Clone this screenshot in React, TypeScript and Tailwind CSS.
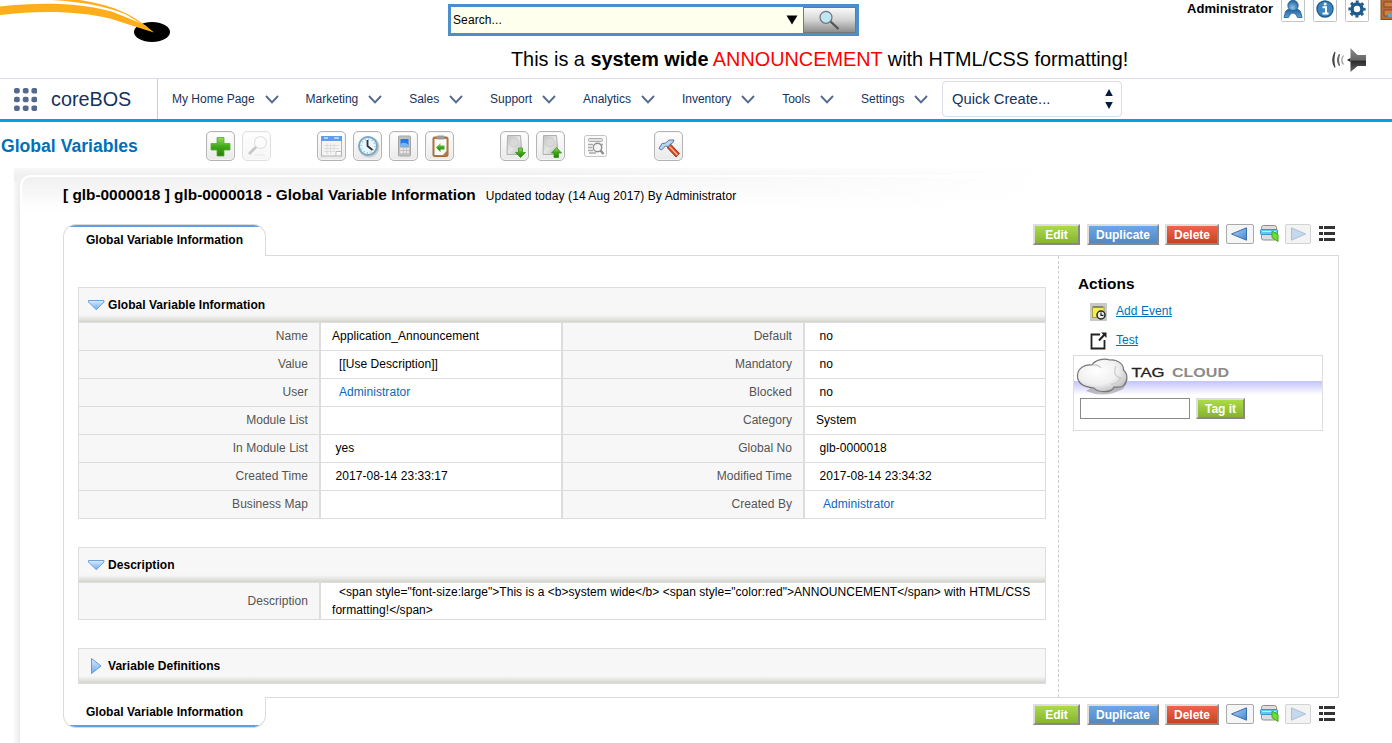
import React from "react";

const MENU = ["My Home Page", "Marketing", "Sales", "Support", "Analytics", "Inventory", "Tools", "Settings"];

type Cell = { label: string; value: string; pad?: string; link?: boolean };

const ROWS: [Cell, Cell][] = [
  [{ label: "Name", value: "Application_Announcement", pad: "pl-[11px]" }, { label: "Default", value: "no" }],
  [{ label: "Value", value: "[[Use Description]]", pad: "pl-[18px]" }, { label: "Mandatory", value: "no" }],
  [{ label: "User", value: "Administrator", pad: "pl-[18px]", link: true }, { label: "Blocked", value: "no" }],
  [{ label: "Module List", value: "" }, { label: "Category", value: "System", pad: "pl-[11px]" }],
  [{ label: "In Module List", value: "yes" }, { label: "Global No", value: "glb-0000018" }],
  [{ label: "Created Time", value: "2017-08-14 23:33:17" }, { label: "Modified Time", value: "2017-08-14 23:34:32" }],
  [{ label: "Business Map", value: "" }, { label: "Created By", value: "Administrator", pad: "pl-[18px]", link: true }],
];

function Gradients() {
  return (
    <svg width="0" height="0" className="absolute">
      <defs>
        <linearGradient id="green" x1="0" y1="0" x2="0" y2="1">
          <stop offset="0" stopColor="#8fdc5c" />
          <stop offset="0.5" stopColor="#3fa817" />
          <stop offset="1" stopColor="#2a7d0c" />
        </linearGradient>
        <linearGradient id="blue" x1="0" y1="0" x2="0" y2="1">
          <stop offset="0" stopColor="#1c5f9c" />
          <stop offset="1" stopColor="#5fa0d2" />
        </linearGradient>
        <linearGradient id="sky" x1="0" y1="0" x2="0" y2="1">
          <stop offset="0" stopColor="#d8ecff" />
          <stop offset="1" stopColor="#6fa9ec" />
        </linearGradient>
        <linearGradient id="arrow" x1="0" y1="0" x2="1" y2="1">
          <stop offset="0" stopColor="#b4d2f2" />
          <stop offset="1" stopColor="#3f87d4" />
        </linearGradient>
        <linearGradient id="metal" x1="0" y1="0" x2="1" y2="1">
          <stop offset="0" stopColor="#c0c0c0" />
          <stop offset="0.5" stopColor="#e6e6e6" />
          <stop offset="1" stopColor="#b8b8b8" />
        </linearGradient>
        <linearGradient id="speaker" x1="0" y1="0" x2="0" y2="1">
          <stop offset="0" stopColor="#8a8a8a" />
          <stop offset="0.5" stopColor="#666" />
          <stop offset="0.55" stopColor="#2c2c2c" />
          <stop offset="1" stopColor="#666" />
        </linearGradient>
        <radialGradient id="head" cx="0.45" cy="0.7" r="0.7">
          <stop offset="0" stopColor="#8cc3e8" />
          <stop offset="1" stopColor="#1d5f9b" />
        </radialGradient>
        <radialGradient id="cloud" cx="0.4" cy="0.35" r="0.7">
          <stop offset="0" stopColor="#ffffff" />
          <stop offset="0.6" stopColor="#f0f0f0" />
          <stop offset="1" stopColor="#bdbdbd" />
        </radialGradient>
      </defs>
    </svg>
  );
}

function Chevron() {
  return (
    <svg width="14" height="9" viewBox="0 0 14 9">
      <path d="M1 1 L7 7.4 L13 1" fill="none" stroke="#54698d" strokeWidth="1.9" />
    </svg>
  );
}

function Header() {
  return (
    <header className="flex h-[78px] items-start">
      <svg width="448" height="44" viewBox="0 0 448 44" className="shrink-0">
        <ellipse cx="152" cy="32" rx="18" ry="10" fill="#000" />
        <path d="M0 6.500 C40 2 80 2.500 113 12 L145 25 L154 32.500 Q130 25 110 18.500 C80 11 40 10 0 15 Z" fill="#feae1b" />
        <path d="M52 0 C82 2 106 6 126 14.500 L146 26.500 C132 14 110 4 76 -0.500 Z" fill="#feae1b" />
      </svg>
      <div className="flex w-[744px] shrink-0 flex-col items-center">
        <div className="mt-1 flex h-8 w-[411px] self-start border-[3px] border-[#4d8fcc] bg-[#ffffee]">
          <div className="flex flex-1 items-center justify-between pr-[5px] pl-[2px] text-[12px] tracking-[0.1px]">
            <span>Search...</span>
            <svg width="12" height="10" viewBox="0 0 12 10"><path d="M0.5 0.5H11.5L6 9.5Z" fill="#000" /></svg>
          </div>
          <div className="flex w-[53px] justify-center border border-[#777] bg-linear-to-b from-[#fafafa] via-[#d4d4d4] to-[#8e8e8e]">
            <svg width="24" height="22" viewBox="0 0 24 22" className="mt-px">
              <path d="M12 12 L20.5 20" stroke="#555" strokeWidth="2.4" />
              <circle cx="8" cy="8.3" r="6" fill="#c0e6f3" stroke="#6c7880" strokeWidth="1.2" />
            </svg>
          </div>
        </div>
        <div className="mt-2.5 -ml-[1px] h-[26px] self-start pl-16 text-[19.85px] leading-[26px] whitespace-nowrap">
          This is a <b>system wide</b> <span className="text-[#ff0000]">ANNOUNCEMENT</span> with HTML/CSS formatting!
        </div>
      </div>
      <div className="flex w-[200px] flex-col">
        <div className="-ml-[5px] flex h-[22px] overflow-hidden">
          <b className="mt-px h-4 text-[13px] leading-4 tracking-[0.06px]">Administrator</b>
          <svg width="120" height="22" viewBox="0 0 120 22" className="ml-[7px] shrink-0">
            <g fill="#fff" stroke="#c4c4c4">
              <rect x="1.5" y="-4.5" width="23" height="26" rx="1" />
              <rect x="33.5" y="-4.5" width="23" height="26" rx="1" />
              <rect x="65.500" y="-4.500" width="23" height="26" rx="1" />
            </g>
            <path d="M4 17.500 L5.500 11.500 Q7 9.500 9 9 H17 Q19 9.500 20.500 11.500 L22 17.500 H17.500 Q16 13 13 13 Q10 13 8.500 17.500 Z" fill="url(#blue)" stroke="#1f5c92" strokeWidth="0.8" />
            <circle cx="13" cy="5.500" r="5.200" fill="url(#head)" stroke="#1f5c92" strokeWidth="0.8" />
            <circle cx="45" cy="9" r="8" fill="#3d86bd" stroke="#1d5d93" strokeWidth="1.4" />
            <path d="M42.500 7.200H46V13M42.500 13.500H48.500" fill="none" stroke="#fff" strokeWidth="2" />
            <circle cx="45.2" cy="4" r="1.5" fill="#fff" />
            <circle cx="77" cy="9" r="5" fill="none" stroke="#1f5b8d" strokeWidth="3.6" />
            <circle cx="77" cy="9" r="7.4" fill="none" stroke="#1f5b8d" strokeWidth="2.4" strokeDasharray="3 2.81" strokeDashoffset="1.5" />
            <rect x="101" y="-2" width="20" height="21.5" fill="#b66a35" stroke="#8b4a20" />
            <path d="M104 2H120V7H104Z M104 10H120V16H104Z" fill="#c98149" stroke="#8b4a20" />
            <path d="M108 14H120V17H108Z" fill="#54a8da" />
          </svg>
        </div>
        <svg width="38" height="26" viewBox="0 0 38 26" className="mt-[25px] ml-[138px]">
          <path d="M5 5 Q0.500 13 5 20.500 Q2.800 13 5 5Z" fill="#333" stroke="#444" strokeWidth="1.1" />
          <path d="M9.500 7 Q5.500 13 9.500 19 Q7.500 13 9.500 7Z" fill="#555" stroke="#666" strokeWidth="1" />
          <path d="M13.500 8.500 Q10 13 13.500 17.500" fill="none" stroke="#999" strokeWidth="1.2" />
          <path d="M20.500 1 L27.500 8 H36 V19 H27.500 L20.500 25 Z" fill="url(#speaker)" />
          <path d="M17 13 L20.500 11 V15 Z" fill="#222" />
        </svg>
      </div>
    </header>
  );
}

function Nav() {
  return (
    <nav className="flex h-11 border-t border-b-[3px] border-t-[#d8dde6] border-b-[#00a1e0] text-[#16325c]">
      <div className="flex w-[158px] items-center border-r border-[#ccc] pl-3.5">
        <svg width="23" height="23" viewBox="0 0 23 23" fill="#54698d">
          {[0, 8.7, 17.4].map((y) => [0, 8.8, 17.4].map((x) => <rect key={`${x}-${y}`} x={x} y={y} width="5.800" height="5.600" rx="2" />))}
        </svg>
        <span className="ml-3.5 text-[19.8px] leading-10">coreBOS</span>
      </div>
      <div className="flex w-[784px] items-center gap-[26.9px] pl-3.5 text-[12px]">
        {MENU.map((m) => (
          <div key={m} className="flex items-center gap-[10px] whitespace-nowrap">
            {m}
            <Chevron />
          </div>
        ))}
      </div>
      <div className="mt-[2px] flex h-9 w-[180px] items-center justify-between rounded-[4px] border border-[#d8dde6] pr-2 pl-[9px] text-[14.75px]">
        <span>Quick Create...</span>
        <svg width="8" height="20" viewBox="0 0 8 20" fill="#061c3f"><path d="M4 0L7.8 7H0.2ZM4 20L7.8 13H0.2Z" /></svg>
      </div>
    </nav>
  );
}

function Tool({ children, className = "" }: { children: React.ReactNode; className?: string }) {
  return (
    <div className={`flex h-[30px] w-[29px] shrink-0 items-center justify-center rounded-[5px] border border-[#b4b4b4] bg-linear-to-b from-white to-[#e9e9e9] shadow-[inset_0_0_0_1px_#f4f4f4] ${className}`}>
      {children}
    </div>
  );
}

function Disk({ up }: { up?: boolean }) {
  return (
    <svg width="25" height="26" viewBox="0 0 25 26">
      <path d="M5.500 2.500H18.500L20 21.500H5Z" fill="url(#metal)" stroke="#b0b0b0" />
      <circle cx="12" cy="9.500" r="4.500" fill="#d9d9d9" stroke="#c4c4c4" strokeWidth="0.7" />
      <path d={up ? "M18.500 14.500 L23.500 20 H20.500 V24.500 H16 V20 H13.500Z" : "M18.500 24.500 L23.500 19.500 H20.500 V15 H16.500 V19.500 H13.500Z"} fill="url(#green)" stroke="#2f8a12" strokeWidth="0.7" />
    </svg>
  );
}

function Toolbar() {
  return (
    <div className="flex h-[46px] items-start pt-[9px]">
      <span className="mt-px w-[205px] pl-[1px] text-[17.6px] leading-7 font-bold text-[#0070ba]">Global Variables</span>
      <Tool className="ml-px">
        <svg width="23" height="23" viewBox="0 0 23 23"><path d="M8 2.5H15V8.5H21V15H15V21H8V15H2V8.5H8Z" fill="url(#green)" stroke="#55ad30" strokeWidth="0.8" /></svg>
      </Tool>
      <Tool className="ml-[7px] opacity-40">
        <svg width="24" height="24" viewBox="0 0 24 24">
          <circle cx="15.500" cy="8.500" r="6" fill="#f8f8f8" stroke="#bbb" strokeWidth="1.2" />
          <path d="M11 13L4 20" stroke="#777" strokeWidth="2.8" />
          <path d="M9 21H20" stroke="#ccc" strokeWidth="1.2" />
        </svg>
      </Tool>
      <Tool className="ml-[46px]">
        <svg width="23" height="24" viewBox="0 0 23 24">
          <rect x="1.5" y="2.5" width="20" height="19.5" fill="#f4f4f4" stroke="#b4b4b4" />
          <rect x="1" y="2" width="21" height="5" fill="#5f9ee0" />
          <path d="M4 4H8M14 4H19" stroke="#c8e4ff" strokeWidth="1.4" />
          <path d="M4 11.5H19M4 14.5H19M4 17.5H15M7 9.5V20M10.5 9.5V20M14 9.5V18" stroke="#dadada" strokeWidth="0.9" />
          <path d="M16 22V17.5H21.5" fill="#fff" stroke="#bbb" />
        </svg>
      </Tool>
      <Tool className="ml-[7px]">
        <svg width="24" height="24" viewBox="0 0 24 24">
          <circle cx="13" cy="13" r="10.500" fill="#cdcdcd" />
          <circle cx="12" cy="12" r="9" fill="#eaf6ff" stroke="#7ba7c0" strokeWidth="2" />
          <circle cx="12" cy="12" r="6.800" fill="none" stroke="#87c0dd" strokeDasharray="1 2.56" strokeWidth="1.4" />
          <path d="M11.5 6V12L16.5 16" fill="none" stroke="#333" strokeWidth="1.8" />
        </svg>
      </Tool>
      <Tool className="ml-[7px]">
        <svg width="24" height="26" viewBox="0 0 24 26">
          <rect x="6.500" y="3" width="12" height="20" rx="1" fill="#c2c2c2" stroke="#a5a5a5" />
          <rect x="8.500" y="6" width="8" height="7.500" fill="#227ce0" />
          <path d="M8.500 11Q12 8.500 16.500 11.500V13.500H8.500Z" fill="#79b6f4" />
          <path d="M8 16H11M12 16H14M15 16H17M8 19H11M12 19H14M15 19H17" stroke="#f3f3f3" strokeWidth="1.6" />
        </svg>
      </Tool>
      <Tool className="ml-[7px]">
        <svg width="24" height="26" viewBox="0 0 24 26">
          <rect x="5" y="4" width="15" height="19.500" rx="1.5" fill="#b9783f" stroke="#a06a3c" />
          <path d="M6.500 6H18.500V18L15 22H6.500Z" fill="#fafafa" />
          <rect x="9" y="2.500" width="7.5" height="4" rx="1" fill="#9b9b9b" />
          <path d="M8 14.500L12.500 10V12.500H16.500V16.500H12.500V19Z" fill="url(#green)" />
        </svg>
      </Tool>
      <Tool className="ml-[46px]"><Disk /></Tool>
      <Tool className="ml-[7px]"><Disk up /></Tool>
      <svg width="23" height="23" viewBox="0 0 23 23" className="mt-[4px] ml-[19px] shrink-0">
        <rect x="0.5" y="0.5" width="22" height="21" rx="2" fill="#fafafa" stroke="#c4c4c4" />
        <rect x="4.5" y="3.5" width="14" height="3" rx="1" fill="#e2e2e2" stroke="#aaa" />
        <path d="M4 9.5H9M4 12.5H8M4 15.5H9M5 18H12M16 9.5H19" stroke="#aaa" strokeWidth="1.3" />
        <circle cx="13.5" cy="12.5" r="4.2" fill="#f5f5f5" stroke="#909090" strokeWidth="1.4" />
        <path d="M16.5 15.5L19.5 19" stroke="#888" strokeWidth="2" />
      </svg>
      <Tool className="ml-[47px]">
        <svg width="25" height="26" viewBox="0 0 25 26">
          <path d="M12 13L14.500 11L23.500 20.500L20 24L11.500 15Z" fill="#d9481f" stroke="#7b2b18" strokeWidth="0.8" />
          <path d="M13.500 13.500L21.500 22" stroke="#ffc09f" strokeWidth="1.2" />
          <path d="M3 15.500L6 10.500L9.500 10L13 7H18L17 9.500L14.500 11L12 14L9.500 13L5.500 17Z" fill="#b7d4f0" stroke="#5a78a5" />
        </svg>
      </Tool>
    </div>
  );
}

function Button({ children, className }: { children: React.ReactNode; className: string }) {
  return (
    <div className={`flex h-[21px] items-center justify-center border-2 border-t-[#dedede] border-r-[#888] border-b-[#888] border-l-[#dedede] bg-linear-to-b text-[12px] font-bold text-white ${className}`}>
      {children}
    </div>
  );
}

function RecordButtons({ className }: { className: string }) {
  return (
    <div className={`flex items-start ${className}`}>
      <Button className="w-[47px] from-[#abdb47] to-[#88b330]">Edit</Button>
      <Button className="ml-[7px] w-[72px] from-[#67a8ec] to-[#5489bf]">Duplicate</Button>
      <Button className="ml-[6px] w-[54px] from-[#ee6649] to-[#cb4022]">Delete</Button>
      <div className="ml-[7px] flex h-5 w-7 items-center justify-center rounded-[2px] border border-[#aaaaaa] bg-[#f5f5f5]">
        <svg width="18" height="14" viewBox="0 0 18 14" className="-ml-[3px]"><path d="M1.500 7L16.500 0.800V13.200Z" fill="url(#arrow)" stroke="#3a6fab" /></svg>
      </div>
      <svg width="20" height="18" viewBox="0 0 20 18" className="ml-[6px]">
        <rect x="1.500" y="1.500" width="15" height="14.500" rx="2" fill="#dcdce2" stroke="#8f8f8f" />
        <rect x="0.500" y="5.500" width="17" height="5" rx="1" fill="#5fc8f1" stroke="#2e9cd1" />
        <path d="M2 7.5H16" stroke="#c4efff" />
        <path d="M12 7L18 10.500V17.500L12 13.500Z" fill="#6de02f" stroke="#3fa617" />
      </svg>
      <div className="ml-[5px] flex h-5 w-[26px] items-center justify-center rounded-[2px] border border-[#d2d2d2] bg-[#f3f3f3]">
        <svg width="17" height="14" viewBox="0 0 17 14"><path d="M15.5 7L1.500 0.8V13.2Z" fill="#c5d8ec" stroke="#a5c0de" /></svg>
      </div>
      <svg width="17" height="16" viewBox="0 0 17 16" fill="#333" className="mt-px ml-[8px]">
        <path d="M0 1H4V4H0ZM5 1H16V4H5ZM0 7H4V10H0ZM5 7H16V10H5ZM0 13H4V16H0ZM5 13H16V16H5Z" />
      </svg>
    </div>
  );
}

function SectionHeader({ title, closed }: { title: string; closed?: boolean }) {
  return (
    <div className="flex h-9 items-center border border-[#dddddd] bg-[linear-gradient(#f7f7f7_0,#f7f7f7_27px,#e4e4df_31px,#d3d4cd_34px)] pl-[9px] text-[12px] font-bold">
      <svg width="17" height="16" viewBox="0 0 17 16" className="mr-[3px]">
        {closed ? (
          <path d="M3.500 0.500L13 8L3.500 15.500Z" fill="url(#sky)" stroke="#5d9bdc" />
        ) : (
          <path d="M0.500 3.500H16V5L8.300 12.800L0.500 5Z" fill="url(#sky)" stroke="#6ea3da" />
        )}
      </svg>
      <span>{title}</span>
    </div>
  );
}

function FieldPair({ cell }: { cell: Cell }) {
  return (
    <>
      <div className="flex items-center justify-end border-x border-b border-[#dddddd] bg-[#f7f7f7] pr-[11px] pb-[2px] text-[#545454]">{cell.label}</div>
      <div className={`flex items-center border-x border-b border-[#dddddd] pb-[2px] ${cell.pad ?? "pl-[14.5px]"} ${cell.link ? "text-[#0b66c3]" : ""}`}>
        {cell.value}
      </div>
    </>
  );
}

function Actions() {
  return (
    <aside className="w-[280px] border-l border-dashed border-[#cccccc] pt-[18px] pl-[14px]">
      <h2 className="pl-[5px] text-[15.4px] leading-5 font-bold">Actions</h2>
      <div className="mt-[8px] flex h-[18px] items-center pl-[17px] text-[12px]">
        <svg width="17" height="18" viewBox="0 0 17 18" className="mt-px">
          <rect width="17" height="18" fill="#c9c9c9" />
          <rect x="2.5" y="4" width="11.5" height="10.5" fill="#f3ee4d" stroke="#8e8b38" strokeWidth="0.7" />
          <path d="M3.5 4H13.5" stroke="#555" strokeWidth="2.2" strokeDasharray="1 1" />
          <circle cx="11" cy="12" r="4" fill="#eee" stroke="#222" strokeWidth="1.5" />
          <path d="M11 9.5V12.3H13.5" fill="none" stroke="#222" strokeWidth="1.2" />
        </svg>
        <span className="ml-[9px] tracking-[0.05px] text-[#0070ba] underline">Add Event</span>
      </div>
      <div className="mt-[11px] flex h-[18px] items-center pl-[17px] text-[12px]">
        <svg width="17" height="18" viewBox="0 0 17 18" className="mt-px">
          <path d="M10 2.500H1.500V16.500H14.500V8" fill="none" stroke="#222" strokeWidth="1.8" />
          <path d="M9 8.500L15 2" fill="none" stroke="#222" strokeWidth="2" />
          <path d="M11 0.500H16.500V6Z" fill="#222" />
        </svg>
        <span className="ml-[9px] text-[#0070ba] underline">Test</span>
      </div>
      <div className="mt-[6px] h-[76px] w-[250px] border border-[#dddddd]">
        <div className="flex h-[41px] bg-[linear-gradient(#fff_0,#fff_25px,#c3c3fa_25px,#fff_39px)]">
          <svg width="160" height="41" viewBox="0 0 160 41">
            <path d="M12 35Q30 43 49 33L53 27Q40 34 20 30Z" fill="#777" opacity="0.45" />
            <path d="M20 32C9 31 3 27 3.5 19C4 12 11 8 18 9C21 4 29 2 36 4C43 3 50 8 49.500 14C54 18 54 25 50 29C48 32 43 31 40 31C38 37 24 37 20 32Z" fill="url(#cloud)" stroke="#777" strokeWidth="1.2" />
            <path d="M19 9Q24 8 27 12M42 10Q38 20 47 22Q42 29 37 28" fill="none" stroke="#c9c9c9" strokeWidth="1.2" />
            <text x="57.500" y="21" fontFamily="Liberation Sans" fontSize="12.500" fill="#222" stroke="#222" strokeWidth="0.3" textLength="33" lengthAdjust="spacingAndGlyphs">TAG</text>
            <text x="98" y="21" fontFamily="Liberation Sans" fontSize="12.500" fontWeight="bold" fill="#8a8a8a" textLength="57" lengthAdjust="spacingAndGlyphs">CLOUD</text>
          </svg>
        </div>
        <div className="mt-px flex pl-[6px]">
          <input className="h-[21px] w-[110px] border border-[#8a8a8a] bg-white" />
          <Button className="ml-[6px] w-[49px] from-[#abdb47] to-[#88b330]">Tag it</Button>
        </div>
      </div>
    </aside>
  );
}

export default function App() {
  return (
    <div className="h-[743px] w-[1392px] overflow-hidden bg-white font-['Liberation_Sans',Arial,sans-serif] text-black">
      <Gradients />
      <Header />
      <Nav />
      <Toolbar />
      <div className="ml-[14px] h-[575px] bg-[linear-gradient(to_right,transparent_500px,#fff_1040px),linear-gradient(#f8f8f8,#efefef_8px,#f4f4f4_20px,#fafafa_60px,#fafafa)]">
        <div className="h-full bg-[linear-gradient(to_right,#fafafa,#ebebeb_6px,transparent_7px)] [background-position:0_14px] bg-no-repeat pt-[7px] pl-[6px]">
          <main className="h-[568px] rounded-tl-[11px] border-t-2 border-l-2 border-white bg-[linear-gradient(to_right,transparent_350px,#fff_1030px),linear-gradient(#f0f0f0,#fff_34px)] pl-[41px]">
            <div className="flex h-[47px] items-start pt-[8px]">
              <h1 className="text-[15.38px] leading-5 font-bold whitespace-nowrap">[ glb-0000018 ] glb-0000018 - Global Variable Information</h1>
              <span className="ml-[10px] text-[12px] leading-[22px] tracking-[0.07px] whitespace-nowrap">Updated today (14 Aug 2017) By Administrator</span>
            </div>
            <div className="flex h-8 w-[1276px]">
              <div className="flex h-8 w-[203px] flex-col overflow-hidden rounded-t-[13px] border-x border-t border-[#dddbda] bg-white text-[12px] leading-5 font-bold">
                <div className="h-[2px] shrink-0 bg-[#5e9fe8]" />
                <span className="pt-[3px] pl-[22px] tracking-[0.04px]">Global Variable Information</span>
              </div>
              <div className="flex-1 border-b border-[#dddbda]">
                <RecordButtons className="ml-[767px]" />
              </div>
            </div>
            <div className="flex h-[441px] w-[1276px] border-x border-[#dddbda] bg-white">
              <div className="w-[994px] shrink-0 pt-[31px] pl-[14px]">
                <div className="w-[968px] text-[12px] tracking-[0.045px]">
                  <SectionHeader title="Global Variable Information" />
                  <div className="grid auto-rows-[28px] grid-cols-4">
                    {ROWS.map(([a, b]) => (
                      <React.Fragment key={a.label}>
                        <FieldPair cell={a} />
                        <FieldPair cell={b} />
                      </React.Fragment>
                    ))}
                  </div>
                  <div className="h-7" />
                  <SectionHeader title="Description" />
                  <div className="flex h-[37px]">
                    <div className="flex w-[242px] items-center justify-end border-x border-b border-[#dddddd] bg-[#f7f7f7] pr-[11px] text-[#545454]">Description</div>
                    <div className="flex-1 border-x border-b border-[#dddddd] pl-[11px] indent-[7px] leading-[18px]">
                      {'<span style="font-size:large">This is a <b>system wide</b> <span style="color:red">ANNOUNCEMENT</span> with HTML/CSS formatting!</span>'}
                    </div>
                  </div>
                  <div className="h-7" />
                  <SectionHeader title="Variable Definitions" closed />
                </div>
              </div>
              <Actions />
            </div>
            <div className="flex h-[31px] w-[1276px]">
              <div className="flex w-[203px] flex-col justify-between overflow-hidden rounded-b-[13px] border-x border-b border-[#dddbda] bg-white text-[12px] leading-5 font-bold">
                <span className="pt-[5px] pl-[22px] tracking-[0.04px]">Global Variable Information</span>
                <div className="h-[2px] shrink-0 bg-[#5e9fe8]" />
              </div>
              <div className="flex-1 border-t border-[#dddbda] pt-[6px]">
                <RecordButtons className="ml-[767px]" />
              </div>
            </div>
          </main>
        </div>
      </div>
    </div>
  );
}
